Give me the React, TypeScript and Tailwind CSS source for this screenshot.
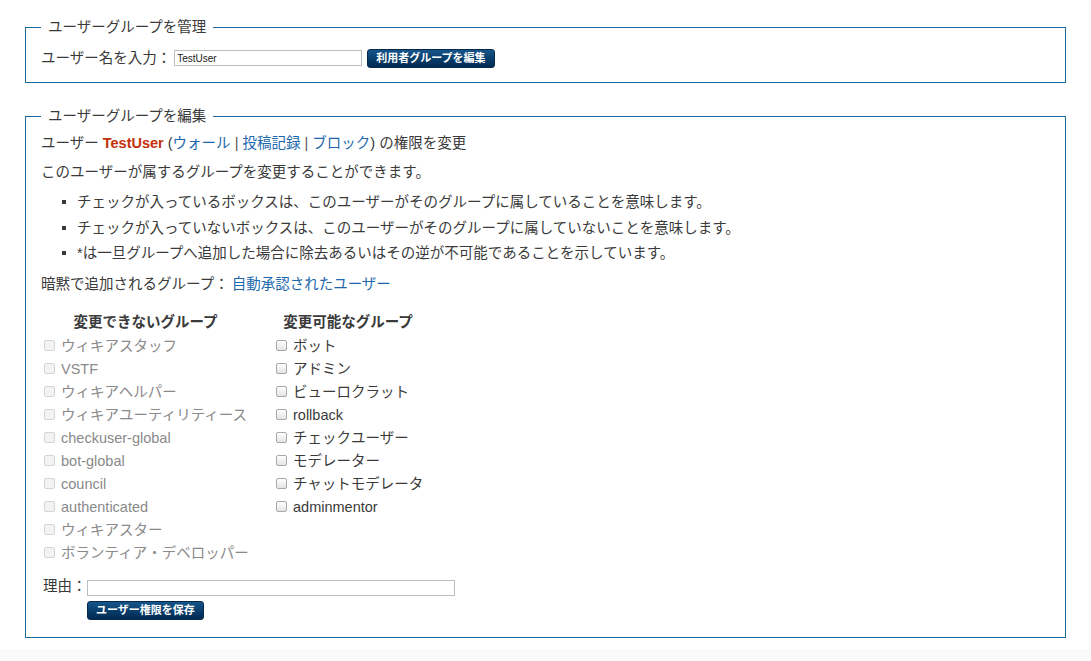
import React from "react";

const fixedGroups = [
  "ウィキアスタッフ",
  "VSTF",
  "ウィキアヘルパー",
  "ウィキアユーティリティース",
  "checkuser-global",
  "bot-global",
  "council",
  "authenticated",
  "ウィキアスター",
  "ボランティア・デベロッパー",
];

const editableGroups = [
  "ボット",
  "アドミン",
  "ビューロクラット",
  "rollback",
  "チェックユーザー",
  "モデレーター",
  "チャットモデレータ",
  "adminmentor",
];

function Box({ disabled }: { disabled?: boolean }) {
  return (
    <span
      className={
        "inline-block h-[11px] w-[11px] shrink-0 rounded-[2px] border " +
        (disabled
          ? "border-[#d4d4d4] bg-[#f3f3f3]"
          : "border-[#a8a8a8] bg-gradient-to-b from-[#ffffff] to-[#e4e4e4]")
      }
    />
  );
}

function NavyButton({ children }: { children: React.ReactNode }) {
  return (
    <button className="flex h-[19px] items-center justify-center rounded-[3px] border border-[#06284a] bg-gradient-to-b from-[#15558a] to-[#022a52] px-[8px] text-[11px] font-bold leading-none text-white">
      {children}
    </button>
  );
}

export default function App() {
  return (
    <div className="flex min-h-[661px] flex-col bg-white font-['Liberation_Sans','Noto_Sans_CJK_JP',sans-serif] text-[14.5px] text-[#3a3a3a]">
      <div className="flex flex-col gap-[23px] px-[25px] pt-[17px]">
        <fieldset className="border border-[#1a6a9c] px-[15px] pb-[14px] pt-[11px]">
          <legend className="px-[7px] leading-[20px]">ユーザーグループを管理</legend>
          <div className="flex h-[20px] items-center">
            <span className="leading-[20px]">ユーザー名を入力：</span>
            <input
              defaultValue="TestUser"
              className="ml-[3px] h-[16px] w-[188px] border border-[#bdbdbd] px-[2px] text-[10px] text-[#222] outline-none"
            />
            <div className="ml-[5px] w-[128px]">
              <NavyButton>利用者グループを編集</NavyButton>
            </div>
          </div>
        </fieldset>

        <fieldset className="border border-[#1a6a9c] px-[15px] pb-[17px] pt-[7px]">
          <legend className="px-[7px] leading-[20px]">ユーザーグループを編集</legend>
          <p className="leading-[20px]">
            ユーザー <span className="font-bold text-[#c4300b]">TestUser</span> (
            <a className="text-[#1d68ad]">ウォール</a> <span className="text-[#555]">|</span>{" "}
            <a className="text-[#1d68ad]">投稿記録</a> <span className="text-[#555]">|</span>{" "}
            <a className="text-[#1d68ad]">ブロック</a>) の権限を変更
          </p>
          <p className="mt-[9px] leading-[20px]">このユーザーが属するグループを変更することができます。</p>
          <ul className="mt-[10px] flex flex-col gap-[5.5px] pl-[21px]">
            {[
              "チェックが入っているボックスは、このユーザーがそのグループに属していることを意味します。",
              "チェックが入っていないボックスは、このユーザーがそのグループに属していないことを意味します。",
              "*は一旦グループへ追加した場合に除去あるいはその逆が不可能であることを示しています。",
            ].map((t) => (
              <li key={t} className="flex items-center gap-[11px] leading-[20px]">
                <span className="h-[4px] w-[4px] bg-[#3a3a3a]" />
                {t}
              </li>
            ))}
          </ul>
          <p className="mt-[11px] leading-[20px]">
            暗黙で追加されるグループ：<a className="ml-[3px] text-[#1d68ad]">自動承認されたユーザー</a>
          </p>

          <div className="mt-[17px] flex gap-[23px]">
            <div className="flex w-[209px] flex-col">
              <div className="h-[23px] text-center font-bold leading-[23px]">変更できないグループ</div>
              {fixedGroups.map((g) => (
                <label key={g} className="flex h-[23px] items-center gap-[6px] pl-[3px] text-[#8a8a8a]">
                  <Box disabled />
                  <span className="whitespace-nowrap leading-[20px]">{g}</span>
                </label>
              ))}
            </div>
            <div className="flex w-[150px] flex-col">
              <div className="h-[23px] text-center font-bold leading-[23px]">変更可能なグループ</div>
              {editableGroups.map((g) => (
                <label key={g} className="flex h-[23px] items-center gap-[6px] pl-[3px]">
                  <Box />
                  <span className="whitespace-nowrap leading-[20px]">{g}</span>
                </label>
              ))}
            </div>
          </div>

          <div className="mt-[12px] flex h-[20px] items-end pl-[2px]">
            <span className="leading-[20px]">理由：</span>
            <input className="h-[16px] w-[368px] border border-[#bdbdbd] outline-none" />
          </div>
          <div className="mt-[5px] box-content w-[117px] pl-[46px]">
            <NavyButton>ユーザー権限を保存</NavyButton>
          </div>
        </fieldset>
      </div>
      <div className="mt-[11px] flex-1 bg-[#fafafa]" />
    </div>
  );
}
